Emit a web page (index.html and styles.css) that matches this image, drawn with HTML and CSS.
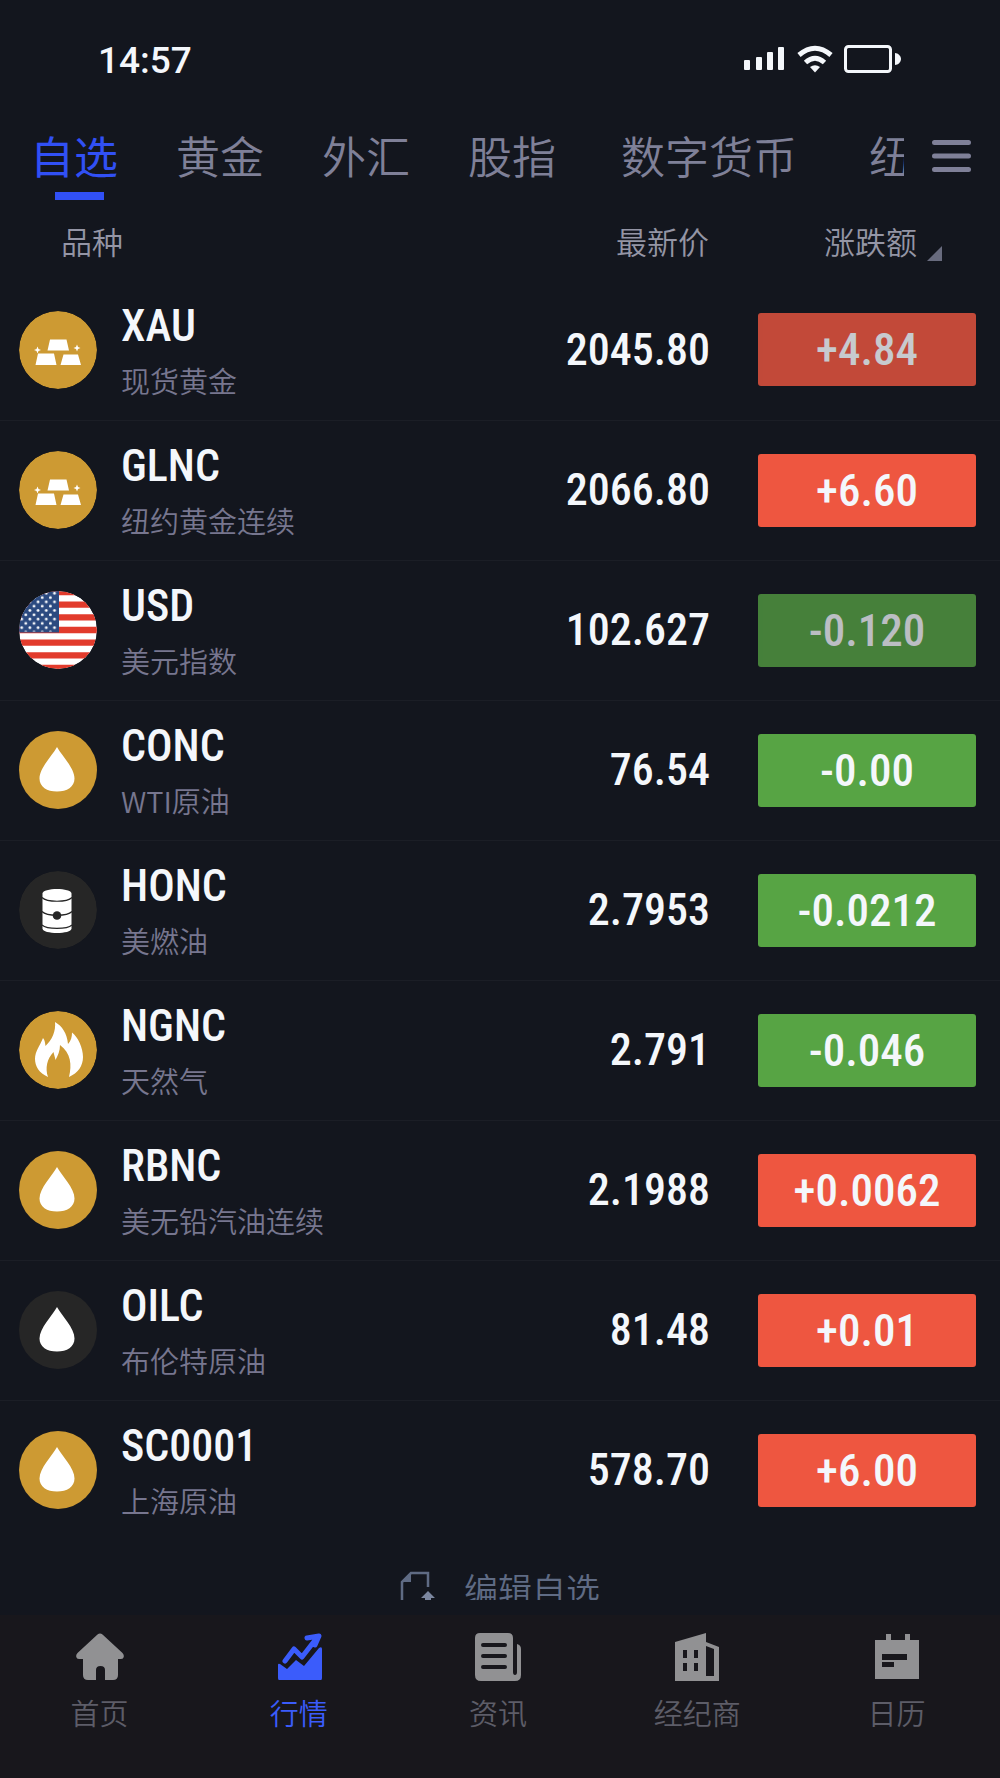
FILE: index.html
```html
<!DOCTYPE html>
<html lang="zh-CN">
<head>
<meta charset="UTF-8">
<meta name="viewport" content="width=device-width, initial-scale=1.0">
<title>行情</title>
<link rel="stylesheet" href="styles.css">
</head>
<body>

<!-- shared icons -->
<svg class="sprite" aria-hidden="true">
  <symbol id="icon-gold" viewBox="0 0 78 78">
    <circle cx="39" cy="39" r="39" fill="#cd9a33"/>
    <g fill="#fff">
      <path d="M31 28.500h16.500l2.500 11H28.500zM19 42.500h16l2.500 11.500H16.500zM44.500 43.500h14.500l3 10.500H41.500z"/>
      <path d="M18.500 35.500l1 2.500 2.500 1-2.500 1-1 2.500-1-2.500-2.500-1 2.500-1zM58 33.500l1 2.500 2.500 1-2.500 1-1 2.500-1-2.500-2.500-1 2.500-1z"/>
    </g>
  </symbol>
  <symbol id="icon-drop" viewBox="0 0 78 78">
    <path d="M38 16C43 25 55.500 37 55.500 47.500C55.500 56 48 60.500 38 60.500S20.500 56 20.500 47.500C20.500 37 33 25 38 16z" fill="#fff"/>
  </symbol>
  <symbol id="icon-barrel" viewBox="0 0 78 78">
    <circle cx="39" cy="39" r="39" fill="#262626"/>
    <path d="M23.500 22.500C23.500 16.500 52.500 16.500 52.500 22.500V57.500C52.500 63.500 23.500 63.500 23.500 57.500z" fill="#fff"/>
    <g fill="none" stroke="#262626" stroke-width="1.200">
      <path d="M23 26.500C28 31.500 48 31.500 53 26.500M23 40.500C28 45.500 48 45.500 53 40.500M23 54C28 58.500 48 58.500 53 54"/>
    </g>
    <circle cx="38" cy="44.500" r="4.300" fill="#262626"/>
  </symbol>
  <symbol id="icon-fire" viewBox="0 0 78 78">
    <circle cx="39" cy="39" r="39" fill="#cd9a33"/>
    <path d="M36 11C43 15 48 22 49 33C52 30 53 26 53 21.500C59 26 64 37 64 46C64 55 59 62 50 66C53 54 52 42 41 34C41 40 39 44 36.500 49C36 46 35 44 34.500 41C28 48 26 57 29 66C20 62 16 55 16 48C16 40 21 35 24 27C26 29 26 32 26.500 35C33 29 37 20 36 11z" fill="#fff"/>
  </symbol>
  <symbol id="icon-flag" viewBox="0 0 78 78">
    <defs>
      <clipPath id="round"><circle cx="39" cy="39" r="39"/></clipPath>
      <pattern id="stars" width="8.200" height="8.600" patternUnits="userSpaceOnUse">
        <circle cx="2.700" cy="2.300" r="1.400" fill="#fff"/>
        <circle cx="6.800" cy="6.600" r="1.400" fill="#fff"/>
      </pattern>
    </defs>
    <g clip-path="url(#round)">
      <path d="M0 0h78v78H0z" fill="#fff"/>
      <path d="M0 1h78M0 13.700h78M0 26.300h78M0 39h78M0 51.700h78M0 64.300h78M0 77h78" stroke="#e23b2c" stroke-width="6.300"/>
      <path d="M0 0h40v41.500H0z" fill="#2c4a80"/>
      <path d="M0 0h38v40.500H0z" fill="url(#stars)"/>
    </g>
  </symbol>
</svg>

<header class="status-bar">
  <time class="clock">14:57</time>
  <div class="status-icons">
    <svg width="42" height="28" viewBox="0 0 42 28" fill="#f4f7fb"><rect x="0" y="15" width="6" height="10" rx="1"/><rect x="12" y="12" width="6" height="13" rx="1"/><rect x="23" y="7" width="6" height="18" rx="1"/><rect x="34" y="2" width="6" height="23" rx="1"/></svg>
    <svg width="36" height="28" viewBox="0 0 36 28" fill="none" stroke="#f4f7fb" stroke-width="5"><path d="M2 10Q18-3.500 34 10M8.500 17.500Q18 9 27.500 17.500"/><path d="M13 22q5-3.500 10 0L18 27.500z" fill="#f4f7fb" stroke="none"/></svg>
    <svg width="58" height="28" viewBox="0 0 58 28"><rect x="1.500" y="1.500" width="45" height="25" rx="3" fill="none" stroke="#f4f7fb" stroke-width="3"/><path d="M51 8c3 0 6 3 6 6s-3 6-6 6z" fill="#f4f7fb"/></svg>
  </div>
</header>

<nav class="tabs">
  <div class="tab-list">
    <a class="tab active" href="#">自选</a>
    <a class="tab" href="#">黄金</a>
    <a class="tab" href="#">外汇</a>
    <a class="tab" href="#">股指</a>
    <a class="tab long" href="#">数字货币</a>
    <a class="tab long" href="#">纽约期货</a>
  </div>
  <button type="button" class="menu-button" aria-label="菜单">
    <svg width="39" height="32" viewBox="0 0 39 32" stroke="#7f8098" stroke-width="5" stroke-linecap="round"><path d="M2.500 2.500h34M2.500 16h34M2.500 29.500h34"/></svg>
  </button>
</nav>

<main>
  <table class="quotes">
    <thead>
      <tr>
        <th class="col-name">品种</th>
        <th class="col-price">最新价</th>
        <th class="col-change"><button type="button" class="sort-button">涨跌额<svg width="15" height="15" viewBox="0 0 15 15"><path d="M15 0v15H0z" fill="#686b7e"/></svg></button></th>
      </tr>
    </thead>
    <tbody>
      <tr>
        <td><div class="product"><svg class="logo"><use href="#icon-gold"/></svg><div><div class="code">XAU</div><div class="title">现货黄金</div></div></div></td>
        <td class="price">2045.80</td>
        <td class="change"><span class="badge up fade-up">+4.84</span></td>
      </tr>
      <tr>
        <td><div class="product"><svg class="logo"><use href="#icon-gold"/></svg><div><div class="code">GLNC</div><div class="title">纽约黄金连续</div></div></div></td>
        <td class="price">2066.80</td>
        <td class="change"><span class="badge up">+6.60</span></td>
      </tr>
      <tr>
        <td><div class="product"><svg class="logo"><use href="#icon-flag"/></svg><div><div class="code">USD</div><div class="title">美元指数</div></div></div></td>
        <td class="price">102.627</td>
        <td class="change"><span class="badge down fade-down">-0.120</span></td>
      </tr>
      <tr>
        <td><div class="product"><svg class="logo gold"><use href="#icon-drop"/></svg><div><div class="code">CONC</div><div class="title">WTI原油</div></div></div></td>
        <td class="price">76.54</td>
        <td class="change"><span class="badge down">-0.00</span></td>
      </tr>
      <tr>
        <td><div class="product"><svg class="logo"><use href="#icon-barrel"/></svg><div><div class="code">HONC</div><div class="title">美燃油</div></div></div></td>
        <td class="price">2.7953</td>
        <td class="change"><span class="badge down">-0.0212</span></td>
      </tr>
      <tr>
        <td><div class="product"><svg class="logo"><use href="#icon-fire"/></svg><div><div class="code">NGNC</div><div class="title">天然气</div></div></div></td>
        <td class="price">2.791</td>
        <td class="change"><span class="badge down">-0.046</span></td>
      </tr>
      <tr>
        <td><div class="product"><svg class="logo gold"><use href="#icon-drop"/></svg><div><div class="code">RBNC</div><div class="title">美无铅汽油连续</div></div></div></td>
        <td class="price">2.1988</td>
        <td class="change"><span class="badge up">+0.0062</span></td>
      </tr>
      <tr>
        <td><div class="product"><svg class="logo dark"><use href="#icon-drop"/></svg><div><div class="code">OILC</div><div class="title">布伦特原油</div></div></div></td>
        <td class="price">81.48</td>
        <td class="change"><span class="badge up">+0.01</span></td>
      </tr>
      <tr>
        <td><div class="product"><svg class="logo gold"><use href="#icon-drop"/></svg><div><div class="code">SC0001</div><div class="title">上海原油</div></div></div></td>
        <td class="price">578.70</td>
        <td class="change"><span class="badge up">+6.00</span></td>
      </tr>
    </tbody>
  </table>

  <div class="edit-row">
    <button type="button" class="edit-button">
      <svg width="36" height="36" viewBox="0 0 36 36"><path d="M2 36V11L11 2h17v14" fill="none" stroke="#5f6b84" stroke-width="2.500"/><path d="M1 11L11 1v10z" fill="#5f6b84"/><path d="M28 20l7 7h-4v3h-6v-3h-4z" fill="#7c87a0"/></svg>
      编辑自选
    </button>
  </div>
</main>

<nav class="bottom-nav">
  <a href="#">
    <svg width="48" height="48" viewBox="0 0 48 48"><path d="M21.500 1.500q2.500-2 5 0L46.500 20q2 2.500 1 4.500-.5 1.500-3 1.500H42v16q0 5-5 5h-8V37q0-4-4.500-4T20 37v10h-8q-5 0-5-5V26H3.500Q1 26 .5 24.500q-1-2 1-4.500z" fill="#919193"/></svg>
    首页
  </a>
  <a href="#" class="current">
    <svg width="48" height="48" viewBox="0 0 48 48"><path d="M3 32q0-2 2-1l7 5 9-9 8 6L44 15q3-2 3 1v29q0 2-1 2H4q-1 0-1-2z" fill="#3b5cfb"/><path d="M10 28l9-12 8 8L42.500 4M32 5l12-2-4 9" fill="none" stroke="#3b5cfb" stroke-width="5" stroke-linejoin="round" stroke-linecap="round"/></svg>
    行情
  </a>
  <a href="#">
    <svg width="48" height="48" viewBox="0 0 48 48"><path d="M6 0h28q5 0 5 5v34q0 3 2 3t2-3V11q4 1 4 5v26q0 6-6 6H7q-6 0-6-6V5q0-5 5-5z" fill="#919193"/><path d="M9 12h22M9 23h22M9 34h22" stroke="#18171c" stroke-width="4" stroke-linecap="round"/></svg>
    资讯
  </a>
  <a href="#">
    <svg width="48" height="48" viewBox="0 0 48 48"><path d="M2 9L33 0v9l13 5v34H2zM33 13v30h8V16z" fill="#919193" fill-rule="evenodd"/><path d="M10 17h4v8h-4zM21 17h4v8h-4zM10 30h4v8h-4zM21 30h4v8h-4z" fill="#18171c"/></svg>
    经纪商
  </a>
  <a href="#">
    <svg width="48" height="48" viewBox="0 0 48 48"><path d="M3 7h11V1h5v6h14V1h5v6h9v39H3z" fill="#919193"/><path d="M10 21h25v6H10zM10 29h12v5H10z" fill="#18171c"/></svg>
    日历
  </a>
</nav>

</body>
</html>
```
FILE: styles.css
```css
* {
  box-sizing: border-box;
}

body {
  margin: 0;
  min-height: 100vh;
  display: flex;
  flex-direction: column;
  background-color: #13161e;
  color: #f4f7fb;
  font-family: 'Noto Sans CJK SC', sans-serif;
  font-weight: 350;
}

a {
  color: inherit;
  text-decoration: none;
}

button {
  padding: 0;
  border: none;
  background: none;
  color: inherit;
  font: inherit;
  cursor: pointer;
}

svg {
  display: block;
  flex-shrink: 0;
}

.sprite {
  position: absolute;
  width: 0;
  height: 0;
}

/* Status bar */
.status-bar {
  display: flex;
  justify-content: space-between;
  align-items: center;
  height: 118px;
  padding: 0 98px;
}

.clock {
  padding-top: 3px;
  font-family: Roboto, sans-serif;
  font-size: 37px;
  font-weight: 500;
}

.status-icons {
  display: flex;
  gap: 11px;
}

/* Category tabs */
.tabs {
  display: flex;
  align-items: flex-start;
  height: 88px;
  padding: 0 29px 0 30px;
}

.tab-list {
  flex: 1;
  min-width: 0;
  display: flex;
  gap: 58px;
  overflow: hidden;
}

.tab {
  flex-shrink: 0;
  height: 83px;
  color: #7f8098;
  font-size: 44px;
  line-height: 74px;
  white-space: nowrap;
}

.tab.long {
  padding: 0 7px;
}

.tab.active {
  color: #3150f5;
  font-weight: 400;
}

.tab.active::after {
  content: "";
  display: block;
  width: 49px;
  height: 8px;
  margin-left: 25px;
  background-color: #3150f5;
}

.menu-button {
  margin: 22px 0 0 28px;
}

/* Quotes */
.quotes {
  width: 100%;
  border-collapse: collapse;
  table-layout: fixed;
}

.quotes th {
  height: 74px;
  padding: 0;
  color: #9495a5;
  font-size: 31px;
  font-weight: 350;
  line-height: 40px;
  vertical-align: top;
  padding-top: 15px;
}

.quotes .col-name {
  padding-left: 61px;
  text-align: left;
}

.quotes .col-price {
  width: 260px;
  padding-right: 1px;
  text-align: right;
}

.quotes .col-change {
  width: 290px;
  padding-right: 58px;
  text-align: right;
}

.sort-button {
  display: inline-flex;
  align-items: flex-end;
  gap: 10px;
  line-height: 40px;
}

.quotes td {
  height: 140px;
  padding: 0;
  border-bottom: 1px solid #1b1e26;
}

.quotes tr:last-child td {
  border-bottom: none;
}

.product {
  display: flex;
  align-items: center;
  gap: 24px;
  padding-left: 19px;
}

.logo {
  width: 78px;
  height: 78px;
  border-radius: 50%;
}

.logo.gold {
  background-color: #cd9a33;
}

.logo.dark {
  background-color: #262626;
}

.code,
.price,
.badge {
  font-family: 'Roboto Condensed', 'Liberation Sans Narrow', Roboto, sans-serif;
  font-weight: 500;
}

.code {
  padding-top: 6px;
  font-size: 44px;
  line-height: 54px;
}

.title {
  color: #77768f;
  font-size: 29px;
  line-height: 54px;
}

.price {
  font-size: 44px;
  text-align: right;
}

.quotes .change {
  padding: 0 24px 0 48px;
}

.badge {
  display: block;
  border-radius: 3px;
  font-size: 45px;
  line-height: 73px;
  text-align: center;
}

.up {
  background-color: #ee5640;
}

.down {
  background-color: #57a444;
}

.fade-up {
  opacity: 0.8;
}

.fade-down {
  opacity: 0.75;
}

/* Edit list */
.edit-row {
  height: 60px;
  margin-bottom: 15px;
  overflow: hidden;
}

.edit-button {
  display: flex;
  gap: 28px;
  margin: 0 auto;
  padding-top: 31px;
  color: #5f6b84;
  font-size: 34px;
  line-height: 36px;
}

/* Bottom navigation */
.bottom-nav {
  flex: 1;
  display: flex;
  min-height: 163px;
  padding-right: 4px;
  background-color: #18171c;
}

.bottom-nav a {
  flex: 1;
  display: flex;
  flex-direction: column;
  align-items: center;
  gap: 11px;
  padding-top: 18px;
  color: #5d5d68;
  font-size: 29px;
  line-height: 40px;
}

.bottom-nav .current {
  color: #3b5cfb;
}
```
